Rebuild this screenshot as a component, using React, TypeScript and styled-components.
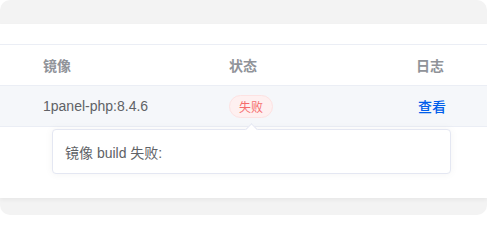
import { FC } from "react";
import styled, { createGlobalStyle } from "styled-components";

const GlobalStyle = createGlobalStyle`
  html, body {
    margin: 0;
    padding: 0;
    background: #fff;
  }
  body {
    font-family: "Liberation Sans", "Noto Sans CJK SC", sans-serif;
  }
`;

const rows = [{ image: "1panel-php:8.4.6", status: "失败", log: "查看" }];

const App: FC = () => {
  return (
    <>
      <GlobalStyle />
      <Styled.Frame>
        <Styled.Card>
          <Styled.Spacer />
          <Styled.Table>
            <Styled.Row>
              <Styled.HeadCell>镜像</Styled.HeadCell>
              <Styled.HeadCell>状态</Styled.HeadCell>
              <Styled.HeadCell>日志</Styled.HeadCell>
            </Styled.Row>
            {rows.map((r, i) => (
              <Styled.Row key={i} $hover>
                <Styled.Cell>{r.image}</Styled.Cell>
                <Styled.Cell>
                  <Styled.Tag>{r.status}</Styled.Tag>
                </Styled.Cell>
                <Styled.Cell>
                  <Styled.Link href="#">{r.log}</Styled.Link>
                </Styled.Cell>
              </Styled.Row>
            ))}
          </Styled.Table>
          <Styled.Popover>
            <Styled.Arrow />
            镜像 build 失败:
          </Styled.Popover>
        </Styled.Card>
      </Styled.Frame>
    </>
  );
};

const Styled = {
  Frame: styled.div`
    width: 487px;
    height: 215px;
    background: #f3f3f3;
    border-radius: 10px;
    padding-top: 24px;
    box-sizing: border-box;
    overflow: hidden;
  `,
  Card: styled.div`
    position: relative;
    height: 174px;
    background: #fff;
    box-shadow: 0 2px 4px rgba(0, 0, 0, 0.05);
  `,
  Spacer: styled.div`
    height: 20px;
  `,
  Table: styled.div`
    border-top: 1px solid #ebeef5;
  `,
  Row: styled.div<{ $hover?: boolean }>`
    display: grid;
    grid-template-columns: 186px 187px 1fr;
    align-items: center;
    padding-left: 43px;
    height: 40px;
    border-bottom: 1px solid #ebeef5;
    background: ${(p) => (p.$hover ? "#f5f7fa" : "#fff")};
  `,
  HeadCell: styled.div`
    font-size: 14px;
    font-weight: bold;
    color: #909399;
  `,
  Cell: styled.div`
    font-size: 14px;
    color: #606266;
    display: flex;
    align-items: center;
  `,
  Tag: styled.span`
    display: inline-flex;
    align-items: center;
    justify-content: center;
    box-sizing: border-box;
    width: 44px;
    height: 23px;
    border-radius: 12px;
    background: #fef0f0;
    border: 1px solid #fde2e2;
    color: #f56c6c;
    font-size: 12px;
  `,
  Link: styled.a`
    margin-left: 2px;
    color: #005eeb;
    font-weight: 500;
    font-size: 14px;
    text-decoration: none;
  `,
  Popover: styled.div`
    position: absolute;
    left: 52px;
    top: 105px;
    width: 399px;
    height: 45px;
    box-sizing: border-box;
    padding: 0 12px;
    display: flex;
    align-items: center;
    background: #fff;
    border: 1px solid #e4e7f2;
    border-radius: 4px;
    box-shadow: 0 0 8px rgba(0, 0, 0, 0.05);
    font-size: 14px;
    color: #606266;
  `,
  Arrow: styled.span`
    position: absolute;
    top: -5px;
    left: 194px;
    width: 8px;
    height: 8px;
    background: #fff;
    border-top: 1px solid #e4e7f2;
    border-left: 1px solid #e4e7f2;
    transform: rotate(45deg);
  `,
};

export default App;
